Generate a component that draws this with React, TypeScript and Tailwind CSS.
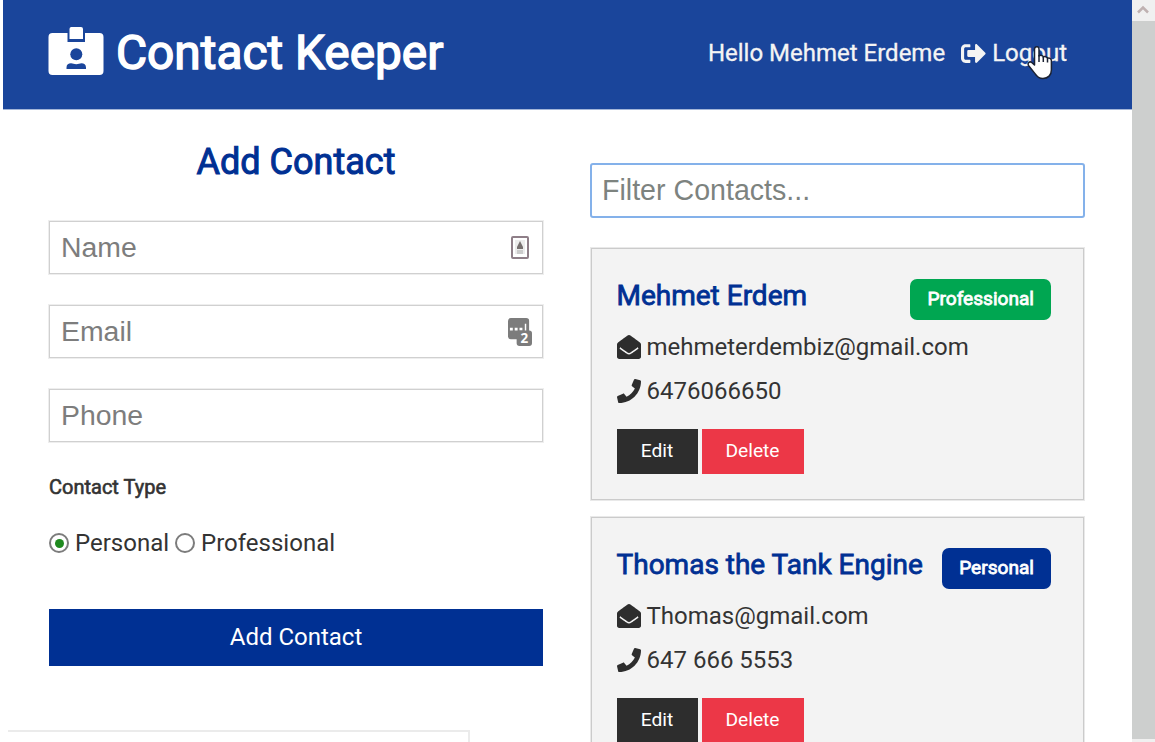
import type { ReactNode } from 'react';
import { FaSignOutAlt, FaEnvelopeOpen, FaPhone } from 'react-icons/fa';

type Contact = { name: string; email: string; phone: string; type: 'Personal' | 'Professional' };

const contacts: Contact[] = [
  { name: 'Mehmet Erdem', email: 'mehmeterdembiz@gmail.com', phone: '6476066650', type: 'Professional' },
  { name: 'Thomas the Tank Engine', email: 'Thomas@gmail.com', phone: '647 666 5553', type: 'Personal' },
];

function BadgeIcon() {
  return (
    <svg className="h-[48px] w-[56px]" viewBox="0 0 56 48">
      <path
        d="M4.500 6H19.500V15H37V6H51.500A4 4 0 0 1 55.500 10V44A4 4 0 0 1 51.500 48H4.500A4 4 0 0 1 .5 44V10A4 4 0 0 1 4.500 6Z"
        fill="#fff"
      />
      <path d="M23 0H33A2 2 0 0 1 35 2V12H21.500V2A2 2 0 0 1 23 0Z" fill="#fff" />
      <circle cx="28.300" cy="27.200" r="6" fill="#1a459b" />
      <path d="M18.500 42V40.500C18.500 37.500 20.500 36.200 23 36.200 25 36.200 26 37.200 28.300 37.200S31.500 36.200 33.500 36.200C36 36.200 38 37.500 38 40.500V42Z" fill="#1a459b" />
    </svg>
  );
}

function Header() {
  return (
    <header className="flex h-[109px] shrink-0 items-center justify-between bg-[#1a459b] pr-[65px] pb-[3px] pl-[45px] text-white shadow-[0_1px_0_#a3b5d8]">
      <h1 className="flex items-center gap-[12px] text-[47.8px] leading-none whitespace-nowrap [-webkit-text-stroke:1.5px_white]">
        <span className="-mt-[4px]">
          <BadgeIcon />
        </span>
        <span className="mt-[2px]">Contact Keeper</span>
      </h1>
      <nav className="flex items-center text-[24px] leading-none whitespace-nowrap text-[#f4f4f4] [-webkit-text-stroke:0.3px_#f4f4f4]">
        <span>Hello Mehmet Erdeme</span>
        <a className="relative ml-[16px] flex items-center gap-[6px]">
          <FaSignOutAlt className="size-[25px]" />
          <span>Logout</span>
          <svg className="absolute top-[4px] left-[65px] h-[36px] w-[29px]" viewBox="0 0 29 36">
            <path
              d="M9 2.500c1.400-1.600 4-.8 4 1.500v7c1.500-1.200 4-.6 4.300 1 1.500-1 3.800-.3 4.200 1.300 1.600-.8 3.900.2 3.900 2.400v9.300c0 5-3.300 8.500-8.400 8.500-3.900 0-6-1.600-7.800-4.600L2.500 20.500c-1.500-2.300 1.200-4.600 3.200-3l2.800 2.500V4z"
              fill="#fff"
              stroke="#1b2233"
              strokeWidth="1.500"
              strokeLinejoin="round"
            />
            <path d="M13 10v7M17.300 12v5M21.500 13.500v4" stroke="#1b2233" strokeWidth="1.500" fill="none" />
          </svg>
        </a>
      </nav>
    </header>
  );
}

function Field({ label, children }: { label: string; children?: ReactNode }) {
  return (
    <div className="mb-[31px] flex h-[53px] items-center justify-between border border-[#d0d0d0] pr-[10px] pl-[11px] font-['Liberation_Sans',sans-serif] text-[28.4px] leading-none text-[#7d7d7d] shadow-[0_0_0_1px_#eeeeee]">
      <span className="mb-[1px]">{label}</span>
      {children}
    </div>
  );
}

function ContactForm() {
  return (
    <section className="w-[494px] pt-[33px]">
      <h2 className="mb-[39px] text-center text-[36px] leading-[40px] text-[#003093] [-webkit-text-stroke:1px_#003093]">Add Contact</h2>
      <Field label="Name">
        <svg className="mr-[3px] h-[23px] w-[18px]" viewBox="0 0 18 23">
          <rect x="1" y="1" width="16" height="21" rx="1" fill="#fff" stroke="#8f7f88" strokeWidth="2" />
          <rect x="4" y="4" width="10" height="14" fill="#ececec" />
          <path d="M9 5l3 6v2H6v-2z" fill="#77706f" />
          <path d="M6 15h6M6 17h6" stroke="#aaa" />
        </svg>
      </Field>
      <Field label="Email">
        <svg className="h-[28px] w-[24px]" viewBox="0 0 25 29">
          <rect x="0" y="0" width="22" height="22" rx="3" fill="#7c7c7c" />
          <path d="M2 10h3v3H2zM7 10h3v3H7zM12 10h3v3h-3zM17.500 6H19v8h-1.500z" fill="#fff" />
          <rect x="9" y="13" width="16" height="16" rx="3" fill="#7c7c7c" />
          <text x="17" y="26" textAnchor="middle" fontFamily="Open Sans, sans-serif" fontWeight="700" fontSize="14" fill="#fff">
            2
          </text>
        </svg>
      </Field>
      <Field label="Phone" />
      <h5 className="pt-[1px] text-[20px] leading-[26px] [-webkit-text-stroke:0.6px_#333]">Contact Type</h5>
      <div className="mt-[29px] mb-[52px] flex h-[28px] items-center text-[24px] leading-none whitespace-nowrap">
        <span className="mr-[6px] flex size-[20px] items-center justify-center rounded-full border-2 border-[#7c7c7c]">
          <span className="size-[9px] rounded-full bg-[#1f8a1f]" />
        </span>
        <span>Personal</span>
        <span className="mr-[6px] ml-[6px] size-[20px] rounded-full border-2 border-[#7c7c7c]" />
        <span>Professional</span>
      </div>
      <button className="flex h-[57px] w-full items-center justify-center bg-[#003093] pb-[2px] text-[24px] text-white">Add Contact</button>
    </section>
  );
}

function ContactCard({ contact }: { contact: Contact }) {
  const badge = contact.type === 'Professional' ? 'bg-[#00a651]' : 'bg-[#003093]';
  return (
    <article className="mx-px mb-[17px] h-[251.5px] border border-[#cbcbcb] bg-[#f3f3f3] pt-[30px] pr-[32px] pl-[24.5px] shadow-[0_0_0_1px_#e9e9e9]">
      <div className="flex h-[41px] items-start justify-between whitespace-nowrap">
        <h3 className="text-[28px] leading-[34px] text-[#003093] [-webkit-text-stroke:0.8px_#003093]">{contact.name}</h3>
        <span className={`flex h-[41px] items-center rounded-[7px] px-[17px] text-[19.1px] text-white [-webkit-text-stroke:0.8px_white] ${badge}`}>
          {contact.type}
        </span>
      </div>
      <div className="mt-[5px] flex h-[44px] items-center gap-[6px] text-[24px] leading-none">
        <FaEnvelopeOpen className="size-[24px] text-[#2d2d2d]" />
        <span>{contact.email}</span>
      </div>
      <div className="flex h-[44px] items-center gap-[6px] text-[24px] leading-none">
        <FaPhone className="size-[24px] text-[#2d2d2d]" />
        <span>{contact.phone}</span>
      </div>
      <div className="mt-[16px] flex gap-[4px] text-[19.2px] text-white">
        <button className="flex h-[45px] w-[81px] items-center justify-center bg-[#2d2d2d]">Edit</button>
        <button className="flex h-[45px] w-[102px] items-center justify-center bg-[#ec3747]">Delete</button>
      </div>
    </article>
  );
}

export default function App() {
  return (
    <div className="relative flex h-[742px] w-[1155px] overflow-hidden bg-white font-[Roboto,sans-serif] text-[#333]">
      <div className="ml-[3px] flex w-[1129px] shrink-0 flex-col">
        <Header />
        <main className="flex gap-[47px] pl-[46px]">
          <ContactForm />
          <section className="w-[495px] pt-[54px]">
            <div className="mb-[30px] flex h-[55px] items-center rounded-[3px] border-2 border-[#84b1ea] pl-[10px] font-['Liberation_Sans',sans-serif] text-[28.6px] leading-none text-[#7d837f]">
              Filter Contacts...
            </div>
            {contacts.map((c) => (
              <ContactCard key={c.name} contact={c} />
            ))}
          </section>
        </main>
      </div>
      <aside className="flex flex-1 flex-col bg-[#f0f0f0]">
        <div className="flex h-[21px] items-center pl-[5px]">
          <svg className="-mt-[2px] h-[9px] w-[12px]" viewBox="0 0 12 9">
            <path d="M1 7.500L6 2.500l5 5" fill="none" stroke="#bfb1b1" strokeWidth="2.500" />
          </svg>
        </div>
        <div className="h-[718px] bg-[#cdcfce]" />
      </aside>
      <div className="absolute top-[730px] left-[8px] h-[20px] w-[462px] border-t-2 border-r-2 border-[#ebebeb] bg-white" />
    </div>
  );
}
